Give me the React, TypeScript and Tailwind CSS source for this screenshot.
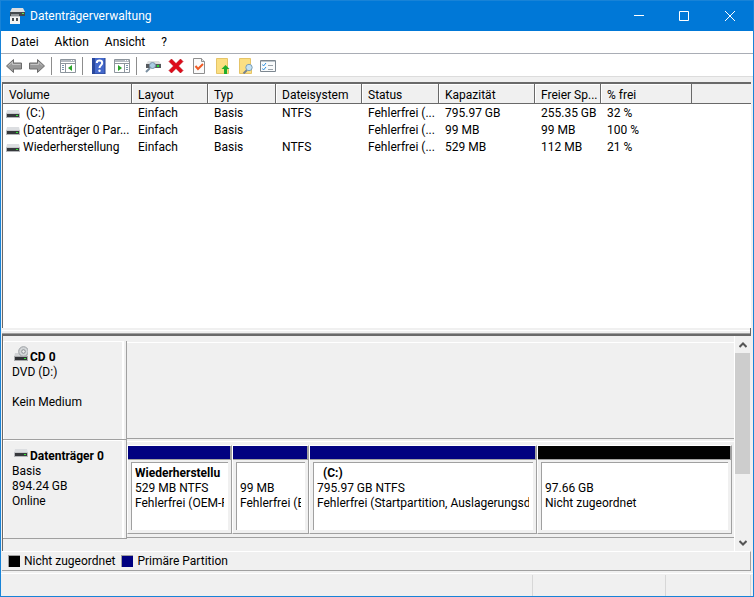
import type { ReactNode } from "react";

const columns = [
  { label: "Volume", width: "w-[129px]" },
  { label: "Layout", width: "w-[76px]" },
  { label: "Typ", width: "w-[68px]" },
  { label: "Dateisystem", width: "w-[86px]" },
  { label: "Status", width: "w-[77px]" },
  { label: "Kapazität", width: "w-[96px]" },
  { label: "Freier Sp...", width: "w-[66px]" },
  { label: "% frei", width: "w-[91px]" },
];

const volumes = [
  { name: "\u00a0(C:)", cells: ["Einfach", "Basis", "NTFS", "Fehlerfrei (...", "795.97 GB", "255.35 GB", "32 %"] },
  { name: "(Datenträger 0 Par...", cells: ["Einfach", "Basis", "", "Fehlerfrei (...", "99 MB", "99 MB", "100 %"] },
  { name: "Wiederherstellung", cells: ["Einfach", "Basis", "NTFS", "Fehlerfrei (...", "529 MB", "112 MB", "21 %"] },
];

const partitions = [
  { name: "Wiederherstellu", size: "529 MB NTFS", status: "Fehlerfrei (OEM-P", grow: "grow-[103]", color: "bg-[#000080]" },
  { name: "", size: "99 MB", status: "Fehlerfrei (E", grow: "grow-[75]", color: "bg-[#000080]" },
  { name: "\u00a0\u00a0(C:)", size: "795.97 GB NTFS", status: "Fehlerfrei (Startpartition, Auslagerungsda", grow: "grow-[226]", color: "bg-[#000080]" },
  { name: "", size: "97.66 GB", status: "Nicht zugeordnet", grow: "grow-[193]", color: "bg-black" },
];

function Svg({ children }: { children: ReactNode }) {
  return (
    <svg width="16" height="16" viewBox="0 0 16 16" className="shrink-0" aria-hidden="true">
      {children}
    </svg>
  );
}

function DriveIcon() {
  return (
    <svg width="14" height="8" viewBox="0 0 14 8" className="shrink-0" aria-hidden="true">
      <path d="M1 0h12l1 4H0z" fill="#dcdee1" />
      <rect y="3" width="14" height="1" fill="#c6c8cb" />
      <rect y="4" width="14" height="4" fill="#b4b6b9" />
      <rect x="1" y="4" width="12" height="3" fill="#36383c" />
      <rect x="10" y="5" width="2" height="1" fill="#32e832" />
    </svg>
  );
}

function CdIcon() {
  return (
    <svg width="14" height="15" viewBox="0 0 14 15" className="shrink-0" aria-hidden="true">
      <path d="M1 7h12l1 4H0z" fill="#d0d2d4" />
      <circle cx="9.500" cy="5.500" r="4.800" fill="#d3d6d8" stroke="#9a9ea2" />
      <circle cx="9.500" cy="5.500" r="1.800" fill="#eee" stroke="#8b8f93" />
      <rect y="10" width="14" height="5" fill="#a9abad" />
      <rect x="1" y="11" width="12" height="3" fill="#303236" />
      <rect x="10" y="12" width="2" height="1" fill="#32e832" />
    </svg>
  );
}

function AppIcon() {
  return (
    <Svg>
      <path d="M3 0h11l2 4H1z" fill="#dcdee0" />
      <path d="M1 4h15v4H1z" fill="#44484b" />
      <path d="M13 5h2v1h-2z" fill="#53f053" />
      <path d="M2 6h8v3H2z" fill="#8d9194" />
      <path d="M1 8h10v8H1z" fill="#f4f4f4" />
      <path d="M1 8h10v1H1z" fill="#c9cbcd" />
      <path d="M3 10h2v3H3zM7 10h2v3H7z" fill="#4b4f52" />
    </Svg>
  );
}

function ArrowIcon({ right = false }: { right?: boolean }) {
  return (
    <Svg>
      <path
        d={right ? "M15.500 8L8.500 1.500V5H.5v6h8v3.500z" : "M.5 8l7-6.500V5h8v6h-8v3.500z"}
        fill="#999"
        stroke="#6c6c6c"
      />
      <path d={right ? "M1.500 6.500h8V4l3.500 3.500" : "M2.500 7.500L6.500 4v2.500h8"} fill="none" stroke="#c4c4c4" />
    </Svg>
  );
}

function PaneIcon({ right = false }: { right?: boolean }) {
  return (
    <Svg>
      <path d="M.5 1.500h15v13H.5z" fill="#fff" stroke="#8d959d" />
      <path d="M1 2h14v2H1z" fill="#b4bac1" />
      <path d="M11 2h1v1h-1zM13 2h1v1h-1z" fill="#fff" />
      <path d="M1 5.500h14" stroke="#8d959d" />
      <path d={right ? "M10.500 6v8" : "M5.500 6v8"} stroke="#8d959d" />
      <path d={right ? "M12 7.500h2M12 9.500h2M12 11.500h2" : "M2 7.500h2M2 9.500h2M2 11.500h2"} stroke="#7992ab" />
      <path d={right ? "M4 7l4 3-4 3z" : "M12 7l-4 3 4 3z"} fill="#28a428" />
    </Svg>
  );
}

function HelpIcon() {
  return (
    <Svg>
      <path d="M1 0h13v16H1z" fill="#4468cb" />
      <path d="M1 0h3v16H1z" fill="#2a489d" />
      <path d="M14 0v16H1" fill="none" stroke="#27428f" />
      <path d="M5.800 5c0-3.300 5.400-3.300 5.400 0 0 2.200-2.700 2.300-2.700 5" fill="none" stroke="#fff" strokeWidth="2" />
      <circle cx="8.500" cy="12.700" r="1.200" fill="#fff" />
    </Svg>
  );
}

function DiskSearchIcon() {
  return (
    <Svg>
      <path d="M3 3h11l2 3H1z" fill="#dcdedf" />
      <path d="M1 6h15v4H1z" fill="#55595d" />
      <path d="M12 7h2v2h-2z" fill="#28db32" />
      <path d="M5 10L1 14" stroke="#7a8fa0" strokeWidth="2" />
      <circle cx="7.500" cy="7.500" r="3" fill="#a9cbe2" stroke="#7994a8" />
    </Svg>
  );
}

function DeleteIcon() {
  return (
    <Svg>
      <path
        d="M3.500 1L8 5.600 12.500 1 15 3.500 10.500 8l4.500 4.500-2.500 2.500L8 10.400 3.500 15 1 12.500 5.500 8 1 3.500z"
        fill="#df0a19"
        stroke="#b40912"
        strokeWidth=".6"
      />
    </Svg>
  );
}

function CheckPageIcon() {
  return (
    <Svg>
      <path d="M2.500.5h8l3 3v12h-11z" fill="#fafafa" stroke="#8e8e8e" />
      <path d="M10.500.5v3h3" fill="#e3e3e3" stroke="#8e8e8e" />
      <path d="M4.500 8l2.500 3 5-5" fill="none" stroke="#ef5a24" strokeWidth="2" />
    </Svg>
  );
}

function FolderPage({ children }: { children: ReactNode }) {
  return (
    <Svg>
      <path d="M2.500.5h11v11h1v4h-12z" fill="#fbdf82" stroke="#e5c468" />
      {children}
    </Svg>
  );
}

function ChecklistIcon() {
  return (
    <Svg>
      <path d="M.5 2.500h15v11H.5z" fill="#f9fbfc" stroke="#7d8790" />
      <path d="M1 3h14v1H1z" fill="#bcc4ca" />
      <path d="M2.500 6.500l1 1.500 2.500-3M2.500 10.500l1 1.500 2.500-3" fill="none" stroke="#2b8fe2" />
      <path d="M8 7.500h5M8 11.500h5" stroke="#9ba3aa" />
    </Svg>
  );
}

function ToolButton({ label, children }: { label: string; children: ReactNode }) {
  return (
    <button type="button" aria-label={label} className="flex h-5 w-[23px] items-center justify-center">
      {children}
    </button>
  );
}

function Separator() {
  return <div className="ml-[3px] mr-1 h-[18px] w-px bg-[#8d8d8d]" />;
}

function TitleBar() {
  return (
    <header className="flex h-[30px] items-center bg-[#0078d7] pl-2 text-white">
      <AppIcon />
      <h1 className="ml-[5px] grow">Datenträgerverwaltung</h1>
      <button type="button" aria-label="Minimieren" className="flex h-full w-11 items-center justify-center">
        <svg width="10" height="10" viewBox="0 0 10 10"><path d="M0 4.500h10" stroke="#fff" /></svg>
      </button>
      <button type="button" aria-label="Maximieren" className="flex h-full w-[46px] items-center justify-center">
        <svg width="10" height="10" viewBox="0 0 10 10"><path d="M.5.5h9v9h-9z" fill="none" stroke="#fff" /></svg>
      </button>
      <button type="button" aria-label="Schließen" className="flex h-full w-[46px] items-center justify-center">
        <svg width="10" height="10" viewBox="0 0 10 10"><path d="M0 0l10 10M10 0L0 10" stroke="#fff" /></svg>
      </button>
    </header>
  );
}

function Toolbar() {
  return (
    <div className="flex h-[23px] items-center border-b border-[#dcdcdc] bg-white pl-px pt-0.5">
      <ToolButton label="Zurück"><ArrowIcon /></ToolButton>
      <ToolButton label="Vorwärts"><ArrowIcon right /></ToolButton>
      <Separator />
      <ToolButton label="Konsolenstruktur"><PaneIcon /></ToolButton>
      <Separator />
      <ToolButton label="Hilfe"><HelpIcon /></ToolButton>
      <ToolButton label="Aktionsbereich"><PaneIcon right /></ToolButton>
      <Separator />
      <ToolButton label="Datenträger neu einlesen"><DiskSearchIcon /></ToolButton>
      <ToolButton label="Löschen"><DeleteIcon /></ToolButton>
      <ToolButton label="Eigenschaften"><CheckPageIcon /></ToolButton>
      <ToolButton label="Öffnen">
        <FolderPage>
          <path d="M11.500 7l4 4h-2.500v5h-3v-5H7.500z" fill="#20ad2c" />
        </FolderPage>
      </ToolButton>
      <ToolButton label="Durchsuchen">
        <FolderPage>
          <path d="M10 12l-3.500 3.500" stroke="#77838c" strokeWidth="2" />
          <circle cx="12" cy="9.500" r="3.200" fill="#c4e2f4" stroke="#7c9eb5" />
        </FolderPage>
      </ToolButton>
      <ToolButton label="Aufgaben"><ChecklistIcon /></ToolButton>
    </div>
  );
}

function VolumeTable() {
  return (
    <section className="min-h-[200px] grow border-l border-t-2 border-[#696969] bg-white">
      <table className="w-full table-fixed border-separate border-spacing-0 text-left">
        <thead>
          <tr className="h-5 bg-[#f0f0f0]">
            {columns.map((col) => (
              <th key={col.label} className={`${col.width} border-b border-r border-[#696969] p-0 font-normal`}>
                <div className="h-[19px] truncate border-l border-t border-white pl-[5px] leading-[20px]">{col.label}</div>
              </th>
            ))}
            <th aria-label="Weitere" className="border-b border-[#696969] p-0" />
          </tr>
        </thead>
        <tbody>
          {volumes.map((vol) => (
            <tr key={vol.name} className="h-[17px] whitespace-nowrap">
              <td className="p-0 pt-0.5">
                <div className="flex items-center gap-[3px] pl-[3px]">
                  <DriveIcon />
                  <span>{vol.name}</span>
                </div>
              </td>
              {vol.cells.map((cell, i) => (
                <td key={i} className="p-0 pl-1.5 pt-0.5">{cell}</td>
              ))}
              <td className="p-0" />
            </tr>
          ))}
        </tbody>
      </table>
    </section>
  );
}

function DiskLabel({ children }: { children: ReactNode }) {
  return (
    <div className="w-[124px] shrink-0 border-b border-r border-[#a0a0a0]">
      <div className="mr-0.5 h-[98px] border-l border-r-2 border-t border-white pl-2 pt-2">{children}</div>
    </div>
  );
}

function Partition({ part }: { part: (typeof partitions)[number] }) {
  return (
    <div className={`${part.grow} min-w-0 basis-0 border-b border-l border-r border-t border-[#a0a0a0] border-l-white border-t-white`}>
      <div className={`h-[13px] border-r border-[#a0a0a0] ${part.color}`} />
      <div className="border-t border-[#a0a0a0] px-[3px] pb-[3px] pt-0.5">
        <div className="h-[68px] border-l border-t border-[#a0a0a0] bg-white pl-[3px] pr-1 pt-[3px]">
          <div className="overflow-hidden whitespace-nowrap">
            <div className="h-[15px] font-bold">{part.name}</div>
            <div>{part.size}</div>
            <div>{part.status}</div>
          </div>
        </div>
      </div>
    </div>
  );
}

function DiskPane() {
  return (
    <section className="flex h-[215px] border-l border-[#696969]">
      <div className="min-w-0 grow pt-[5px]">
        <div className="flex h-[99px]">
          <DiskLabel>
            <div className="flex h-[15px] items-end gap-0.5 pl-0.5 font-bold">
              <div className="pb-1"><CdIcon /></div>
              CD 0
            </div>
            <div>DVD (D:)</div>
            <div className="mt-[15px]">Kein Medium</div>
          </DiskLabel>
          <div className="my-px grow border-b border-t border-[#a0a0a0] border-t-white" />
        </div>
        <div className="flex h-[99px]">
          <DiskLabel>
            <div className="flex h-[15px] gap-0.5 pl-0.5 font-bold"><DriveIcon />Datenträger 0</div>
            <div>Basis</div>
            <div>894.24 GB</div>
            <div>Online</div>
          </DiskLabel>
          <div className="my-px flex min-w-0 grow items-start border-b border-t border-[#a0a0a0] border-t-white pr-0.5 pt-[3px]">
            {partitions.map((part) => (
              <Partition key={part.size} part={part} />
            ))}
          </div>
        </div>
      </div>
      <div className="mr-px flex w-4 shrink-0 flex-col border-l border-white">
        <button type="button" aria-label="Nach oben" className="flex h-[17px] items-center justify-center">
          <svg width="8" height="6" viewBox="0 0 8 6"><path d="M.5 5L4 1.500 7.500 5" fill="none" stroke="#555" strokeWidth="2" /></svg>
        </button>
        <div className="h-[121px] bg-[#cdcdcd]" />
        <div className="grow" />
        <button type="button" aria-label="Nach unten" className="flex h-[17px] items-center justify-center">
          <svg width="8" height="6" viewBox="0 0 8 6"><path d="M.5 1L4 4.500 7.500 1" fill="none" stroke="#555" strokeWidth="2" /></svg>
        </button>
      </div>
    </section>
  );
}

function Legend({ color, label }: { color: string; label: string }) {
  return (
    <div className="flex items-center gap-1">
      <span className={`h-3 w-3 border-l border-t border-[#a0a0a0] ${color}`} />
      {label}
    </div>
  );
}

export default function App() {
  return (
    <div className="flex min-h-screen flex-col border border-[#1883d7] bg-[#f0f0f0] font-['Roboto','Noto_Sans',sans-serif] text-[12px] leading-[15px] text-black">
      <TitleBar />
      <nav className="flex h-[23px] items-center gap-4 border-b border-[#a9adb5] bg-white pl-[10px]">
        <button type="button">Datei</button>
        <button type="button">Aktion</button>
        <button type="button">Ansicht</button>
        <button type="button">?</button>
      </nav>
      <Toolbar />
      <main className="flex grow flex-col pl-px pr-0.5 pt-[5px]">
        <VolumeTable />
        <div className="h-2 border-b-2 border-r border-[#696969] pt-0.5">
          <div className="h-1 border-b border-t border-[#a0a0a0] border-t-white" />
        </div>
        <DiskPane />
        <footer className="flex h-5 items-center gap-1.5 border-b border-r border-t border-[#a0a0a0] border-t-white pl-1.5">
          <Legend color="bg-black" label="Nicht zugeordnet" />
          <Legend color="bg-[#000080]" label="Primäre Partition" />
        </footer>
      </main>
      <div className="mt-0.5 flex h-[23px] border-t border-white pt-px">
        <div className="grow border-r border-[#d7d7d7]" />
        <div className="w-[133px] border-r border-[#d7d7d7]" />
        <div className="w-[85px] border-r border-[#d7d7d7]" />
        <div className="w-0.5" />
      </div>
    </div>
  );
}
